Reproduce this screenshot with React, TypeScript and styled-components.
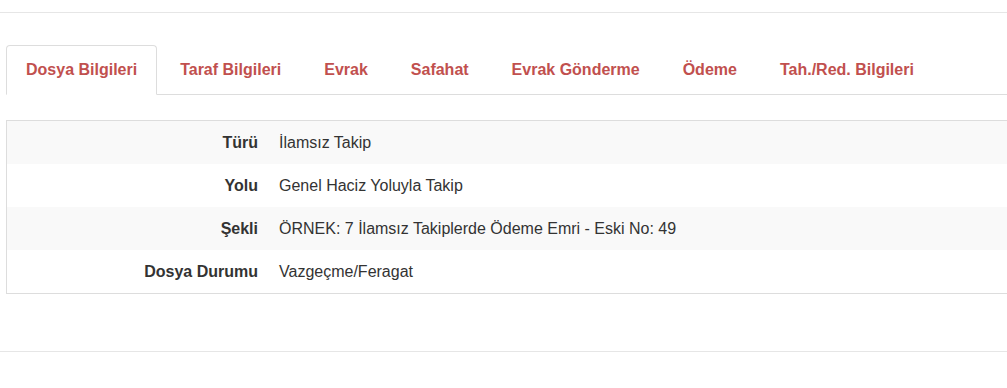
import { useState } from "react";
import styled, { createGlobalStyle } from "styled-components";

const GlobalStyle = createGlobalStyle`
  body {
    margin: 0;
    background: #fff;
    font-family: "Liberation Sans", Arial, sans-serif;
    font-size: 16px;
    color: #333;
  }
`;

const tabs = [
  "Dosya Bilgileri",
  "Taraf Bilgileri",
  "Evrak",
  "Safahat",
  "Evrak Gönderme",
  "Ödeme",
  "Tah./Red. Bilgileri",
];

const rows = [
  { label: "Türü", value: "İlamsız Takip" },
  { label: "Yolu", value: "Genel Haciz Yoluyla Takip" },
  { label: "Şekli", value: "ÖRNEK: 7 İlamsız Takiplerde Ödeme Emri - Eski No: 49" },
  { label: "Dosya Durumu", value: "Vazgeçme/Feragat" },
];

export default function App() {
  const [active, setActive] = useState(0);

  return (
    <>
      <GlobalStyle />
      <Page>
        <Content>
          <TabBar>
            {tabs.map((t, i) => (
              <Tab key={t} $active={i === active} onClick={() => setActive(i)}>
                {t}
              </Tab>
            ))}
          </TabBar>
          <InfoTable>
            {rows.map((r, i) => (
              <Row key={r.label} $striped={i % 2 === 0}>
                <Label>{r.label}</Label>
                <Value>{r.value}</Value>
              </Row>
            ))}
          </InfoTable>
        </Content>
        <Footer />
      </Page>
    </>
  );
}

const Page = styled.div`
  margin-top: 12px;
  border-top: 1px solid #e6e6e6;
  overflow: hidden;
`;

const Content = styled.div`
  padding: 32px 0 0 6px;
`;

const TabBar = styled.div`
  display: flex;
  border-bottom: 1px solid #dddddd;
`;

const Tab = styled.div<{ $active: boolean }>`
  height: 48px;
  display: flex;
  align-items: center;
  padding: 0 19px;
  margin-right: 3px;
  margin-bottom: -1px;
  font-weight: bold;
  font-size: 16px;
  color: #c1504e;
  cursor: pointer;
  border: 1px solid ${(p) => (p.$active ? "#dddddd" : "transparent")};
  border-bottom-color: ${(p) => (p.$active ? "#fff" : "transparent")};
  border-radius: 4px 4px 0 0;
  background: ${(p) => (p.$active ? "#fff" : "transparent")};
`;

const InfoTable = styled.div`
  margin-top: 25px;
  width: calc(100% + 20px);
  border: 1px solid #dddddd;
`;

const Row = styled.div<{ $striped: boolean }>`
  display: grid;
  grid-template-columns: 262px 1fr;
  height: 43px;
  align-items: center;
  background: ${(p) => (p.$striped ? "#f9f9f9" : "#fff")};
`;

const Label = styled.div`
  text-align: right;
  padding-right: 11px;
  font-weight: bold;
`;

const Value = styled.div`
  padding-left: 10px;
`;

const Footer = styled.div`
  margin-top: 57px;
  border-top: 1px solid #e6e6e6;
  height: 36px;
`;
